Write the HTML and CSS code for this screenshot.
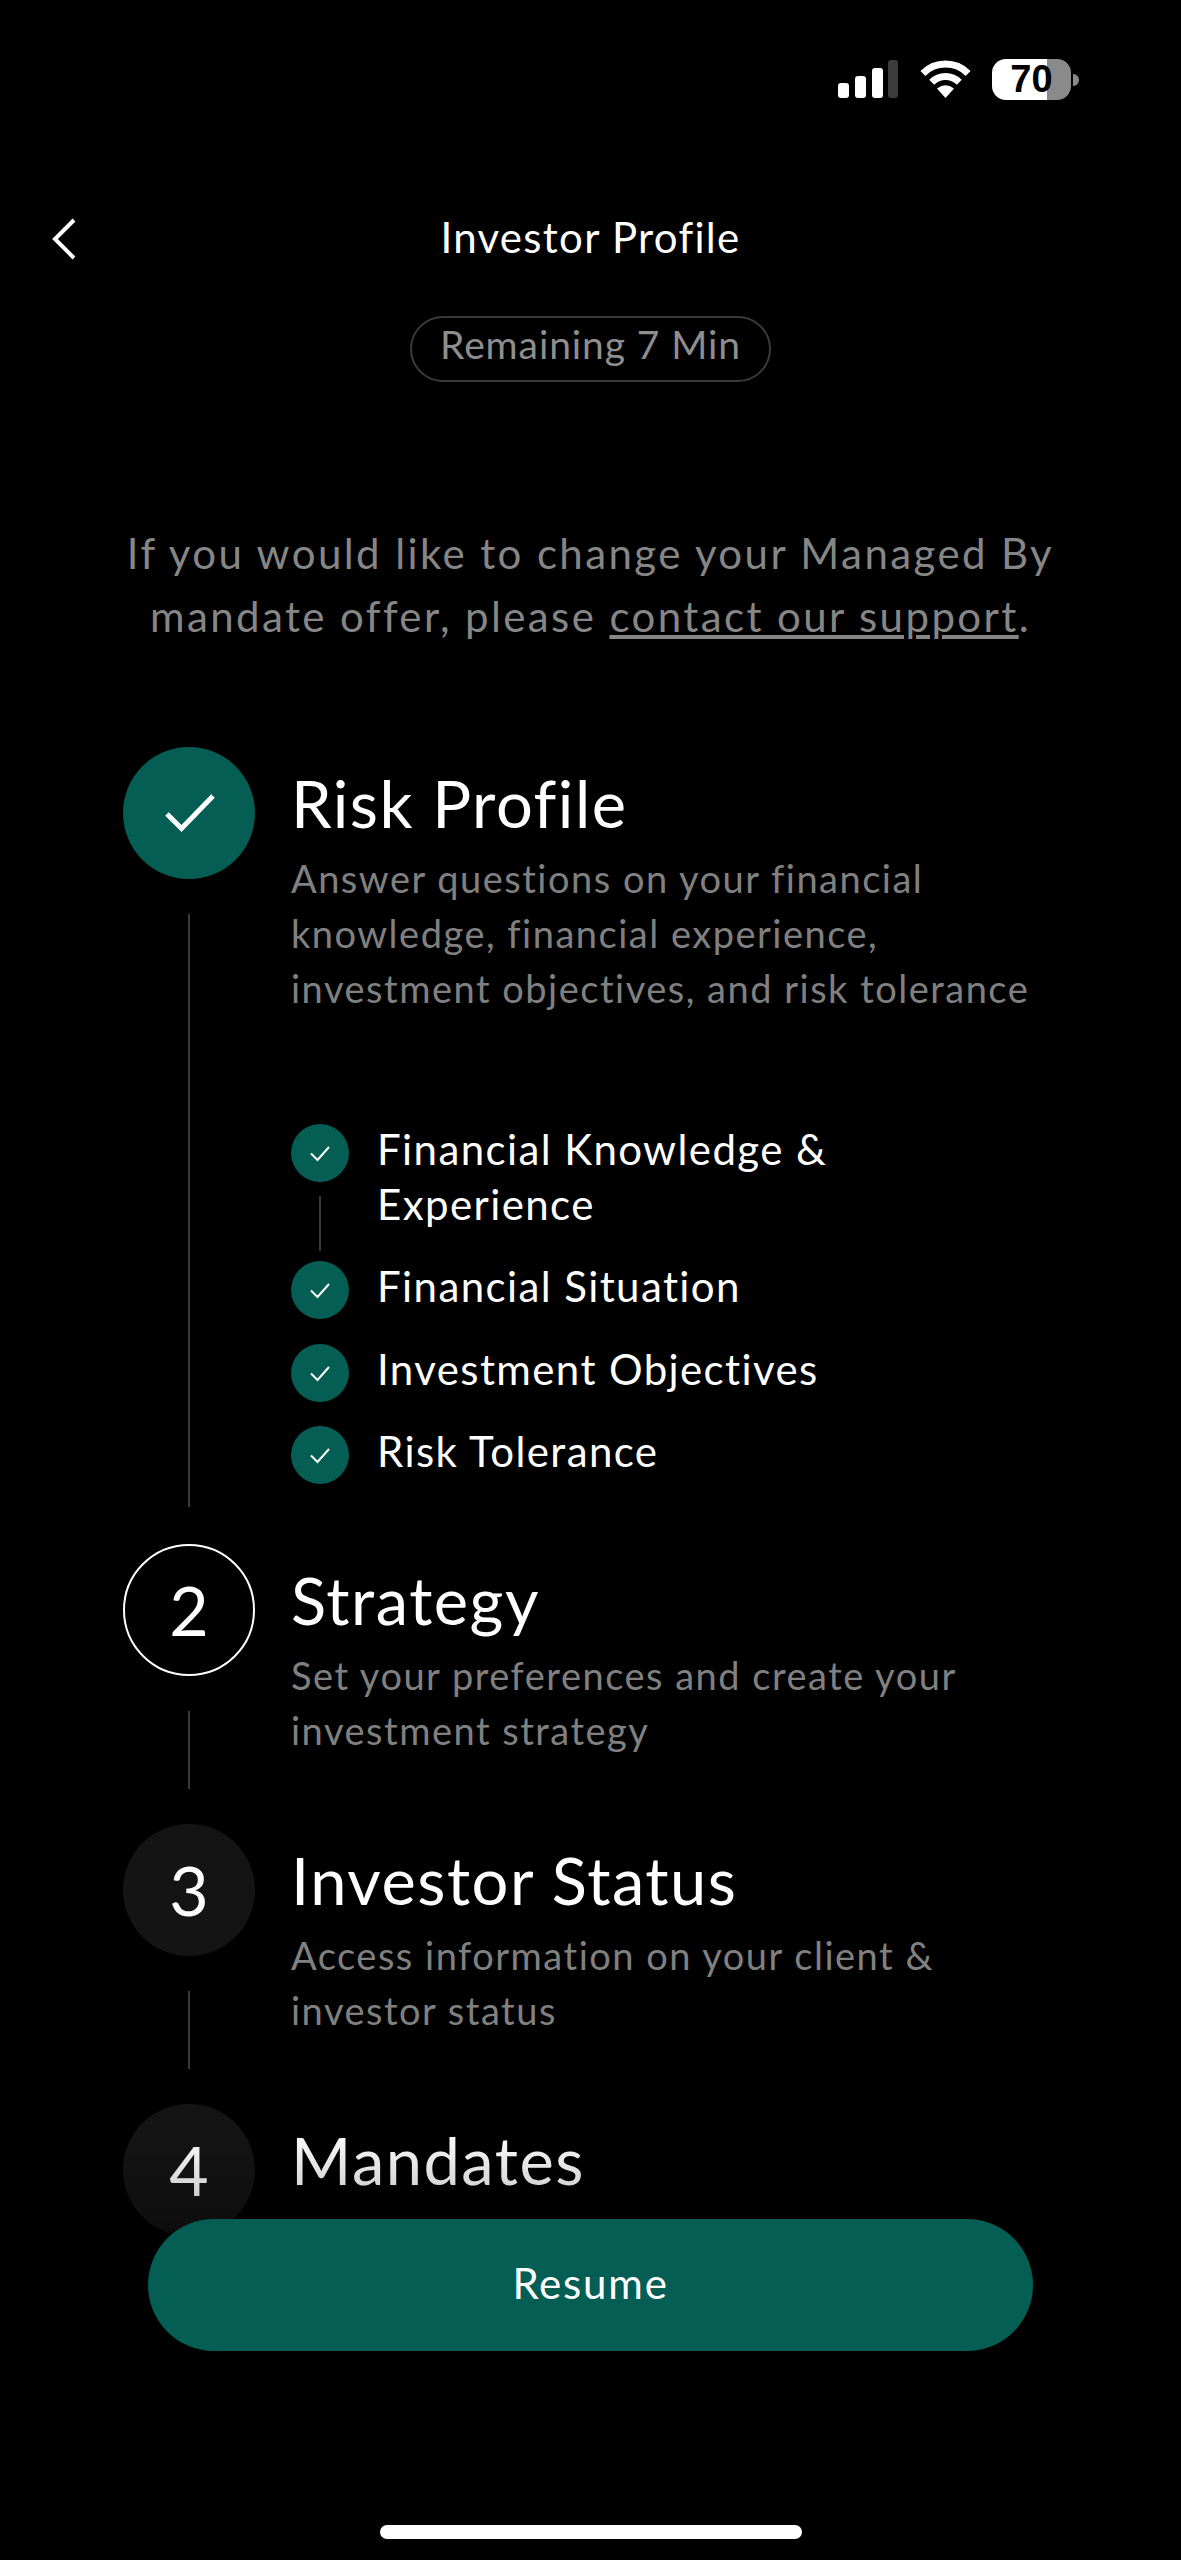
FILE: index.html
```html
<!DOCTYPE html>
<html lang="en">
<head>
    <meta charset="UTF-8">
    <meta name="viewport" content="width=device-width, initial-scale=1.0">
    <title>Investor Profile</title>
    <link rel="stylesheet" href="styles.css">
</head>
<body>
    <div class="screen">
        <!-- Status bar -->
        <div class="status-bar">
            <svg class="signal" width="60" height="38" viewBox="0 0 60 38">
                <rect x="0" y="23" width="11" height="15" rx="3" fill="#fff"/>
                <rect x="17" y="16" width="11" height="22" rx="3" fill="#fff"/>
                <rect x="34" y="8" width="11" height="30" rx="3" fill="#fff"/>
                <rect x="50" y="0" width="10" height="38" rx="3" fill="#3b3b3b"/>
            </svg>
            <svg class="wifi" width="53" height="38" viewBox="0 0 53 38">
                <path d="M3.9 13.4A32 32 0 0 1 49.1 13.4" fill="none" stroke="#fff" stroke-width="7"/>
                <path d="M12.7 22.2A19.5 19.5 0 0 1 40.3 22.2" fill="none" stroke="#fff" stroke-width="7"/>
                <path d="M26.5 38L18 28.5Q26.5 22 35 28.5Z" fill="#fff"/>
            </svg>
            <div class="battery"><span>70</span></div>
        </div>

        <!-- Header -->
        <div class="header">
            <svg class="back" width="24" height="42" viewBox="0 0 24 42">
                <path d="M22 2L3 21L22 40" fill="none" stroke="#fff" stroke-width="4"/>
            </svg>
            <h1>Investor Profile</h1>
        </div>
        <div class="pill-row">
            <div class="pill">Remaining 7 Min</div>
        </div>

        <p class="intro">If you would like to change your Managed By<br>mandate offer, please <a href="#">contact our support</a>.</p>

        <!-- Steps -->
        <div class="steps">
            <div class="step step-risk">
                <div class="marker">
                    <div class="circle circle-done">
                        <svg width="132" height="132" viewBox="0 0 132 132">
                            <path d="M44 67L58.500 81.500L90 49" fill="none" stroke="#fff" stroke-width="5"/>
                        </svg>
                    </div>
                    <div class="marker-line"></div>
                </div>
                <div class="step-body">
                    <h2>Risk Profile</h2>
                    <p>Answer questions on your financial<br>knowledge, financial experience,<br>investment objectives, and risk tolerance</p>
                    <ul class="sub-list">
                        <li class="sub-item sub-item-tall">
                            <div class="sub-marker">
                                <svg class="tick" width="58" height="58" viewBox="0 0 58 58">
                                    <circle cx="29" cy="29" r="29" fill="#045e54"/>
                                    <path d="M20 29.500L26.500 36L38 23" fill="none" stroke="#fff" stroke-width="2"/>
                                </svg>
                                <div class="sub-line"></div>
                            </div>
                            <span>Financial Knowledge &amp;<br>Experience</span>
                        </li>
                        <li class="sub-item">
                            <svg class="tick" width="58" height="58" viewBox="0 0 58 58">
                                <circle cx="29" cy="29" r="29" fill="#045e54"/>
                                <path d="M20 29.500L26.500 36L38 23" fill="none" stroke="#fff" stroke-width="2"/>
                            </svg>
                            <span>Financial Situation</span>
                        </li>
                        <li class="sub-item">
                            <svg class="tick" width="58" height="58" viewBox="0 0 58 58">
                                <circle cx="29" cy="29" r="29" fill="#045e54"/>
                                <path d="M20 29.500L26.500 36L38 23" fill="none" stroke="#fff" stroke-width="2"/>
                            </svg>
                            <span>Investment Objectives</span>
                        </li>
                        <li class="sub-item">
                            <svg class="tick" width="58" height="58" viewBox="0 0 58 58">
                                <circle cx="29" cy="29" r="29" fill="#045e54"/>
                                <path d="M20 29.500L26.500 36L38 23" fill="none" stroke="#fff" stroke-width="2"/>
                            </svg>
                            <span>Risk Tolerance</span>
                        </li>
                    </ul>
                </div>
            </div>

            <div class="step">
                <div class="marker">
                    <div class="circle circle-current">2</div>
                    <div class="marker-line"></div>
                </div>
                <div class="step-body">
                    <h2>Strategy</h2>
                    <p>Set your preferences and create your<br>investment strategy</p>
                </div>
            </div>

            <div class="step">
                <div class="marker">
                    <div class="circle circle-todo">3</div>
                    <div class="marker-line"></div>
                </div>
                <div class="step-body">
                    <h2>Investor Status</h2>
                    <p>Access information on your client &amp;<br>investor status</p>
                </div>
            </div>

            <div class="step">
                <div class="marker">
                    <div class="circle circle-todo">4</div>
                </div>
                <div class="step-body">
                    <h2>Mandates</h2>
                </div>
            </div>
        </div>

        <!-- Button and home bar lie over the list -->
        <div class="footer">
            <button type="button">Resume</button>
            <div class="home-bar"></div>
        </div>
    </div>
</body>
</html>
```

FILE: styles.css
```css
* {
    box-sizing: border-box;
}
body {
    margin: 0;
    background-color: #000;
    color: #fff;
    font-family: Lato, "Open Sans", sans-serif;
}
.screen {
    position: relative;
    width: 1181px;
    height: 2560px;
    overflow: hidden;
}

/* Status bar */
.status-bar {
    height: 100px;
    padding: 59px 110px 0 0;
    display: flex;
    justify-content: flex-end;
    align-items: flex-start;
}
.signal {
    margin: 1px 21px 0 0;
}
.wifi {
    margin: 1px 20px 0 0;
}
.battery {
    position: relative;
    width: 79px;
    height: 41px;
    border-radius: 14px;
    background: linear-gradient(to right, #fff 70%, #8a8a8a 70%);
    color: #000;
    font-family: "Liberation Sans", sans-serif;
    font-size: 38px;
    font-weight: 700;
    line-height: 41px;
    text-align: center;
}
.battery::after {
    content: "";
    position: absolute;
    left: 81px;
    top: 15px;
    width: 6px;
    height: 12px;
    border-radius: 0 6px 6px 0;
    background-color: #8a8a8a;
}

/* Header */
.header {
    position: relative;
    margin-top: 112px;
    height: 50px;
}
.header h1 {
    margin: 0;
    font-size: 42px;
    font-weight: 400;
    letter-spacing: 1.3px;
    line-height: 50px;
    text-align: center;
}
.back {
    position: absolute;
    left: 52px;
    top: 6px;
}
.pill-row {
    margin-top: 54px;
    display: flex;
    justify-content: center;
}
.pill {
    width: 361px;
    height: 66px;
    border: 2px solid #3a3a3a;
    border-radius: 33px;
    color: #8e8e8e;
    font-size: 39px;
    letter-spacing: 0.9px;
    line-height: 52px;
    text-align: center;
}
.intro {
    margin: 140px 0 0;
    color: #868686;
    font-size: 42px;
    letter-spacing: 2.4px;
    line-height: 63px;
    text-align: center;
}
.intro a {
    color: inherit;
}

/* Steps */
.steps {
    margin: 99px 0 0 123px;
}
.step {
    display: flex;
    gap: 36px;
    height: 280px;
}
.step-risk {
    height: 797px;
}
.step-risk .marker-line {
    margin-bottom: 37px;
}
.marker {
    width: 132px;
    flex-shrink: 0;
    display: flex;
    flex-direction: column;
    align-items: center;
}
.marker-line {
    width: 2px;
    flex: 1;
    margin: 35px 0;
    background-color: #3a3a3a;
}
.circle {
    width: 132px;
    height: 132px;
    flex-shrink: 0;
    padding-bottom: 2px;
    border-radius: 50%;
    display: flex;
    align-items: center;
    justify-content: center;
    font-size: 68px;
}
.circle-done {
    padding-bottom: 0;
    background-color: #045e54;
}
.circle-current {
    border: 2px solid #fff;
}
.circle-todo {
    background-color: #141414;
}
.step-body {
    padding-top: 16px;
}
.step-body h2 {
    margin: 0;
    font-size: 65px;
    font-weight: 400;
    letter-spacing: 1.5px;
    line-height: 80px;
}
.step-body p {
    margin: 8px 0 0;
    color: #808080;
    font-size: 38px;
    letter-spacing: 1.5px;
    line-height: 55px;
}

/* Sub steps */
.sub-list {
    list-style: none;
    margin: 0;
    padding: 108px 0 0;
}
.sub-item {
    display: flex;
    gap: 28px;
    height: 82.500px;
    font-size: 42px;
    letter-spacing: 1.4px;
    line-height: 55px;
}
.sub-item-tall {
    height: 137px;
}
.sub-marker {
    display: flex;
    flex-direction: column;
    align-items: center;
}
.sub-line {
    width: 2px;
    height: 55px;
    margin-top: 14px;
    background-color: #3a3a3a;
}
.tick {
    flex-shrink: 0;
}
.sub-item span {
    margin-top: -2px;
}

/* Footer */
.footer {
    position: absolute;
    left: 0;
    right: 0;
    top: 2219px;
    bottom: 0;
    display: flex;
    flex-direction: column;
    align-items: center;
}
.footer::before {
    content: "";
    position: absolute;
    left: 0;
    right: 0;
    top: -90px;
    bottom: 0;
    background: linear-gradient(to bottom, rgba(0, 0, 0, 0) 0, rgba(0, 0, 0, 0.25) 90px, #000 156px);
}
.footer button {
    position: relative;
    width: 885px;
    height: 132px;
    padding-bottom: 6px;
    border: none;
    border-radius: 66px;
    background-color: #045e54;
    color: #fff;
    font-family: inherit;
    font-size: 42px;
    letter-spacing: 1.8px;
    cursor: pointer;
}
.home-bar {
    position: relative;
    width: 422px;
    height: 14px;
    margin-top: 174px;
    border-radius: 7px;
    background-color: #fff;
}
```
